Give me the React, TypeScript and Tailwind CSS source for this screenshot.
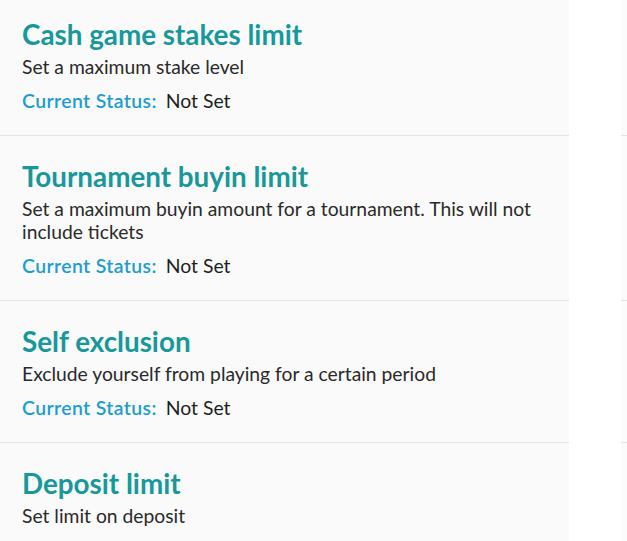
import React from "react";

const rows = [
  {
    title: "Cash game stakes limit",
    desc: "Set a maximum stake level",
  },
  {
    title: "Tournament buyin limit",
    desc: "Set a maximum buyin amount for a tournament. This will not include tickets",
  },
  {
    title: "Self exclusion",
    desc: "Exclude yourself from playing for a certain period",
  },
  {
    title: "Deposit limit",
    desc: "Set limit on deposit",
  },
];

export default function App() {
  return (
    <div
      className="w-[627px] h-[541px] overflow-hidden bg-white"
      style={{ fontFamily: "Lato, 'Open Sans', sans-serif" }}
    >
      <div className="-mt-[6px] flex flex-col">
        {rows.map((r, i) => (
          <div key={i} className="flex">
            <div className="w-[569px] shrink-0 bg-[#fafafa] border-b border-[#e1e4ea] pl-[22px] pr-[20px] pt-[25px] pb-[23px]">
              <h2 className="text-[27.8px] leading-[32px] font-bold text-[#17989b]">
                {r.title}
              </h2>
              <p className="mt-[4px] text-[19.3px] leading-[23px] text-[#2a2a2a]">
                {r.desc}
              </p>
              <div className="mt-[11px] text-[19.4px] leading-[23px] flex">
                <span className="font-semibold tracking-[0.4px] text-[#1c9dd2]">Current Status:</span>
                <span className="ml-[9px] text-[#1f1f1f]">Not Set</span>
              </div>
            </div>
            <div className="w-[52px] shrink-0 bg-white" />
            <div className="flex-1 bg-[#fbfbfb] border-b border-[#e1e4ea]" />
          </div>
        ))}
      </div>
    </div>
  );
}
